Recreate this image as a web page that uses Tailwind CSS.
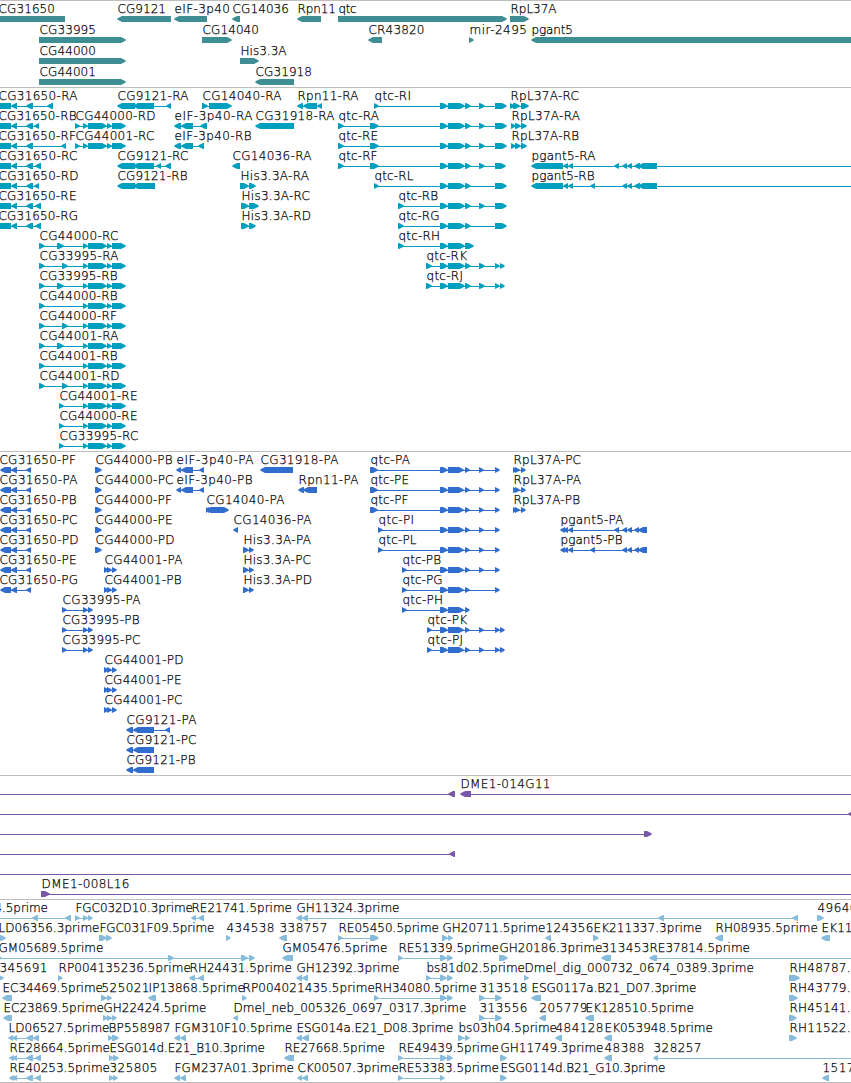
<!DOCTYPE html>
<html lang="en">
<head>
    <meta charset="UTF-8">
    <meta name="viewport" content="width=device-width, initial-scale=1.0">
    <title>Genome tracks</title>
    <script src="https://cdn.jsdelivr.net/npm/@tailwindcss/browser@4"></script>
</head>
<body class="bg-white overflow-hidden">
    <main class="flex flex-col w-[851px] border-b border-[#bebebe] font-['DejaVu_Sans',sans-serif] font-extralight text-[12px]">
        <section class="h-[87px] border-t border-[#bebebe]">
            <svg id="genes" class="block w-full h-full fill-[#3f8e93]"></svg>
        </section>
        <section class="h-[364px] border-t border-[#bebebe]">
            <svg id="transcripts" class="block w-full h-full fill-[#009fbf]"></svg>
        </section>
        <section class="h-[324px] border-t border-[#bebebe]">
            <svg id="proteins" class="block w-full h-full fill-[#306dcc]"></svg>
        </section>
        <section class="h-[124px] border-t border-[#bebebe]">
            <svg id="clones" class="block w-full h-full fill-[#7857a8]"></svg>
        </section>
        <section class="h-[183px] border-t border-[#bebebe]">
            <svg id="ests" class="block w-full h-full fill-[#87bbdc]"></svg>
        </section>
    </main>
    <script>
        // one feature per line: row label x strand start,end start,end ...
        // "*" as label means the feature has no name on screen
        const genes = `
            0 CG31650 -2 L -9,65
            0 CG9121 117 L 117,171
            0 eIF-3p40 174 L 174,207
            0 CG14036 232 L 232,240
            0 Rpn11 297 L 297,321
            0 qtc 338 R 338,507
            0 RpL37A 510 R 510,529
            1 CG33995 39 R 39,126
            1 CG14040 202 R 202,232
            1 CR43820 368 L 368,382
            1 mir-2495 469 R 469,474
            1 pgant5 531 L 531,860
            2 CG44000 39 R 39,126
            2 His3.3A 240 R 240,259
            3 CG44001 39 R 39,126
            3 CG31918 255 L 255,294`;

        const transcripts = `
            0 CG31650-RA -2 L -9,11 11,17 26,33 47,53
            1 CG31650-RB -2 L -9,11 11,17 26,33 34,39
            2 CG31650-RF -2 L -9,11 11,17 26,33 61,66
            3 CG31650-RC -2 L -9,11 11,17 26,33 35,41
            4 CG31650-RD -2 L -9,11 11,17 26,33 34,39
            5 CG31650-RE -2 L -9,11 11,17 26,33 35,41
            6 CG31650-RG -2 L -9,11 11,17 26,33 35,41
            1 CG44000-RD 75 R 75,80 83,88 88,107 107,112 112,126
            2 CG44001-RC 75 R 75,80 83,88 88,107 107,112 112,126
            0 CG9121-RA 117 L 117,135 133,154 166,171
            3 CG9121-RC 117 L 117,135 133,154 156,161 165,171
            4 CG9121-RB 117 L 117,135 133,155
            0 CG14040-RA 202 R 202,208 209,232
            1 eIF-3p40-RA 174 L 174,181 181,193 200,207
            2 eIF-3p40-RB 174 L 174,181 181,193 198,204
            1 CG31918-RA 255 L 255,294
            3 CG14036-RA 232 L 232,240
            4 His3.3A-RA 240 R 240,249 249,256
            5 His3.3A-RC 241 R 241,249 249,259
            6 His3.3A-RD 241 R 241,249 249,256
            0 Rpn11-RA 297 L 297,303 303,317 317,322
            0 qtc-RI 374 R 374,379 440,448 448,465 465,471 479,485 495,507
            1 qtc-RA 338 R 338,344 370,379 440,448 448,465 465,471 479,485 495,507
            2 qtc-RE 338 R 338,344 370,379 440,448 448,465 465,471 479,485 495,507
            3 qtc-RF 338 R 338,344 370,379 440,448 448,465 465,471 479,485 495,506
            4 qtc-RL 374 R 374,379 440,448 448,465 465,471 495,507
            5 qtc-RB 398 R 398,404 440,448 448,465 465,471 479,485 495,507
            6 qtc-RG 398 R 398,404 440,448 448,465 465,471 495,507
            7 qtc-RH 398 R 398,404 440,448 448,465 465,474
            8 qtc-RK 426 R 426,432 440,448 448,465 465,471 479,485 495,500 500,505
            9 qtc-RJ 426 R 426,432 440,448 448,465 465,471 479,485 495,500 500,505
            0 RpL37A-RC 510 R 510,515 513,520 521,529
            1 RpL37A-RA 511 R 511,516 515,521 521,527
            2 RpL37A-RB 511 R 511,516 515,521 521,527
            3 pgant5-RA 531 L 531,563 563,568 568,573 614,619 622,627 627,632 634,640 638,657 860,860
            4 pgant5-RB 531 L 531,563 563,568 568,573 590,595 622,627 627,632 634,640 638,657 860,860
            7 CG44000-RC 39 R 39,45 57,64 83,88 88,107 107,112 112,126
            8 CG33995-RA 39 R 39,45 62,68 83,88 88,107 107,112 112,126
            9 CG33995-RB 39 R 39,45 57,64 83,88 88,107 107,112 112,126
            10 CG44000-RB 39 R 39,45 83,88 88,107 107,112 112,126
            11 CG44000-RF 39 R 39,45 62,68 83,88 88,107 107,112 112,126
            12 CG44001-RA 39 R 39,45 57,64 83,88 88,107 107,112 112,126
            13 CG44001-RB 39 R 39,45 83,88 88,107 107,112 112,126
            14 CG44001-RD 39 R 39,45 62,68 83,88 88,107 107,112 112,126
            15 CG44001-RE 59 R 59,64 83,88 88,107 107,112 112,126
            16 CG44000-RE 59 R 59,64 83,88 88,107 107,112 112,126
            17 CG33995-RC 59 R 59,64 83,88 88,107 107,112 112,126`;

        const proteins = `
            0 CG31650-PF -1 L 0,11 11,17 26,31
            1 CG31650-PA -1 L 0,11 11,17 26,31
            2 CG31650-PB -1 L 0,11 11,17 26,31
            3 CG31650-PC -1 L 0,11 11,17 26,31
            4 CG31650-PD -1 L 0,11 11,17 26,31
            5 CG31650-PE -1 L 0,11 11,17 26,31
            6 CG31650-PG -1 L 0,11 11,17 26,31
            0 CG44000-PB 95 R 95,102
            1 CG44000-PC 95 R 95,102
            2 CG44000-PF 95 R 95,102
            3 CG44000-PE 95 R 95,102
            4 CG44000-PD 95 R 95,102
            5 CG44001-PA 104 R 104,109 107,112 112,117
            6 CG44001-PB 104 R 104,109 107,112 112,117
            7 CG33995-PA 62 R 62,67 83,88 88,93
            8 CG33995-PB 62 R 62,67 83,88 88,93
            9 CG33995-PC 62 R 62,67 83,88 88,93
            10 CG44001-PD 104 R 104,109 107,112 112,117
            11 CG44001-PE 104 R 104,109 107,112 112,117
            12 CG44001-PC 104 R 104,109 107,112 112,117
            13 CG9121-PA 126 L 126,133 133,154 165,170
            14 CG9121-PC 126 L 126,133 133,154
            15 CG9121-PB 126 L 126,133 133,154
            0 eIF-3p40-PA 176 L 176,181 181,193 199,204
            1 eIF-3p40-PB 176 L 176,181 181,193 199,204
            2 CG14040-PA 206 R 206,210 208,213 210,229
            3 CG14036-PA 233 L 233,238
            4 His3.3A-PA 243 R 243,249 249,254
            5 His3.3A-PC 243 R 243,249 249,254
            6 His3.3A-PD 243 R 243,249 249,254
            0 CG31918-PA 260 L 260,293
            1 Rpn11-PA 298 L 298,304 303,317
            0 qtc-PA 370 R 370,378 440,448 448,464 465,470 479,484 495,500
            1 qtc-PE 370 R 370,378 440,448 448,464 465,470 479,484 495,500
            2 qtc-PF 370 R 370,378 440,448 448,464 465,470 479,484 495,500
            3 qtc-PI 378 R 378,383 440,448 448,464 465,470 479,484 495,500
            4 qtc-PL 378 R 378,383 440,448 448,464 465,470 479,484 495,500
            5 qtc-PB 402 R 402,407 440,448 448,464 465,470 479,484 495,500
            6 qtc-PG 402 R 402,407 440,448 448,464 465,470 495,500
            7 qtc-PH 402 R 402,407 440,448 448,464 465,470
            8 qtc-PK 427 R 427,432 440,448 448,464 465,470 479,484 495,500 500,505
            9 qtc-PJ 427 R 427,432 440,448 448,464 465,470 479,484 495,500 500,505
            0 RpL37A-PC 513 R 513,518 515,520 521,526
            1 RpL37A-PA 513 R 513,518 515,520 521,526
            2 RpL37A-PB 513 R 513,518 515,520 521,526
            3 pgant5-PA 560 L 560,565 563,568 568,573 614,619 622,627 627,632 634,639 638,647
            4 pgant5-PB 560 L 560,565 563,568 568,573 590,595 622,627 627,632 634,639 638,647`;

        const clones = `
            0 * 0 L -9,-5 448,455
            0 DME1-014G11 460 L 460,471 860,860
            1 * 0 L -9,-5 848,856
            2 * 0 R -9,-5 644,652
            3 * 0 L -9,-5 449,455
            4 * 0 R -9,-5 860,860
            5 DME1-008L16 41 R 41,50 860,860`;

        const ests = `
            0 4.5prime -6 L -9,-5 32,38 65,71
            0 FGC032D10.3prime 75 R 75,80 83,88 88,93
            0 RE21741.5prime 191 L 191,196 198,204
            0 GH11324.3prime 296 L 296,302 302,308 658,664 792,798
            0 49640 817 R 817,824
            1 LD06356.3prime -2 R -2,6
            1 FGC031F09.5prime 99 R 99,107 106,112
            1 434538 226 R 226,231
            1 338757 279 L 279,287
            1 RE05450.5prime 338 R 338,343 370,379
            1 GH20711.5prime 442 R 442,448 448,453
            1 124356 545 L 545,551
            1 EK211337.3prime 593 R 593,599
            1 RH08935.5prime 715 L 715,723
            1 EK11 821 L 821,830
            2 GM05689.5prime -2 R -3,2 168,174 241,248 249,255
            2 GM05476.5prime 282 L 282,293
            2 RE51339.5prime 398 R 398,403 440,447 447,453
            2 GH20186.3prime 499 R 499,508
            2 313453 601 L 601,611
            2 RE37814.5prime 649 L 649,657 860,860
            3 345691 -1 R -1,4
            3 RP004135236.5prime 58 R 58,63
            3 RH24431.5prime 189 L 189,195 198,204
            3 GH12392.3prime 296 L 296,302 302,308
            3 bs81d02.5prime 426 R 426,431 440,447 447,453
            3 Dmel_dig_000732_0674_0389.3prime 524 R 524,529
            3 RH48787. 789 R 789,800
            4 EC34469.5prime 2 L 2,12
            4 525021 101 R 101,107 107,112
            4 IP13868.5prime 148 L 148,156
            4 RP004021435.5prime 242 R 242,247
            4 RH34080.5prime 374 R 374,379 440,447 447,453
            4 313518 479 R 479,485 495,502
            4 ESG0117a.B21_D07.3prime 531 L 531,541
            4 RH43779. 789 R 789,798
            5 EC23869.5prime 3 L 3,12
            5 GH22424.5prime 103 R 103,108 107,112 112,117
            5 Dmel_neb_005326_0697_0317.3prime 233 L 233,238
            5 313556 479 R 479,485 495,502
            5 205779 539 L 539,546
            5 EK128510.5prime 585 L 585,594
            5 RH45141. 789 R 789,797
            6 LD06527.5prime 8 L 8,13 12,17 26,33 33,39
            6 BP558987 108 R 108,113 112,119
            6 FGM310F10.5prime 174 L 174,180 180,186
            6 ESG014a.E21_D08.3prime 296 L 296,302 302,309
            6 bs03h04.5prime 458 R 458,464 465,470
            6 484128 555 L 555,562
            6 EK053948.5prime 604 L 604,612
            6 RH11522. 789 R 789,797
            7 RE28664.5prime 9 L 9,14 12,17 26,33 35,41
            7 ESG014d.E21_B10.3prime 109 R 109,114 113,119
            7 RE27668.5prime 284 L 284,294
            7 RE49439.5prime 398 R 398,403 440,447 447,453
            7 GH11749.3prime 500 R 500,507
            7 48388 604 L 604,612
            7 328257 653 L 653,658 860,860
            8 RE40253.5prime 9 L 9,14 12,17 26,33 35,41
            8 325805 109 R 109,114 113,118
            8 FGM237A01.3prime 174 L 174,180 180,186
            8 CK00507.3prime 297 L 297,302 302,308
            8 RE53383.5prime 398 R 398,403 440,445
            8 ESG0114d.B21_G10.3prime 500 R 500,507
            8 1517 822 L 822,829`;

        // advance of each character in px, digits are 8
        const advance = {
            A: 8, B: 7, C: 8, D: 9, E: 7, F: 6.5, G: 8.5, H: 9, I: 4, J: 4, K: 8, L: 6.5, M: 11, P: 7, R: 8, S: 7,
            a: 7, b: 7.5, c: 6, d: 7.5, e: 7, g: 7.5, h: 7.5, i: 3, l: 3, m: 11, n: 7, p: 7.5, q: 7.5, r: 5, s: 6, t: 4.5,
            ".": 4, "-": 6.5, "_": 6
        };

        function labelWidth(label) {
            let width = 0;
            for (const ch of label) width += advance[ch] || 8;
            return width;
        }

        function exon(a, b, strand, top) {
            const tip = Math.min(5, b - a);
            if (strand === "R") {
                return `<polygon points="${a},${top} ${b - tip},${top} ${b - 1},${top + 2} ${b},${top + 3} ${b - 1},${top + 4} ${b - tip},${top + 6} ${a},${top + 6}"/>`;
            }
            return `<polygon points="${b},${top} ${a + tip},${top} ${a + 1},${top + 2} ${a},${top + 3} ${a + 1},${top + 4} ${a + tip},${top + 6} ${b},${top + 6}"/>`;
        }

        function drawTrack(id, data, rowHeight) {
            let result = "";
            data.trim().split("\n").forEach((line) => {
                const [row, label, x, strand, ...parts] = line.trim().split(" ");
                const exons = parts.map((part) => part.split(",").map(Number));
                const y = row * rowHeight;
                const start = exons[0][0];
                const end = exons[exons.length - 1][1];
                if (exons.length > 1) {
                    // keep the line off the pointed ends
                    const from = strand === "L" ? start + 3 : start;
                    const to = strand === "R" ? end - 3 : end;
                    result += `<rect x="${from}" y="${y + 18}" width="${to - from}" height="1"/>`;
                }
                exons.forEach(([a, b]) => {
                    if (b > a) result += exon(a, b, strand, y + 15);
                });
                if (label !== "*") {
                    result += `<text x="${Number(x) + 0.5}" y="${y + 12}" textLength="${labelWidth(label)}" class="fill-black stroke-black stroke-[0.25px]">${label}</text>`;
                }
            });
            document.getElementById(id).innerHTML = result;
        }

        drawTrack("genes", genes, 21);
        drawTrack("transcripts", transcripts, 20);
        drawTrack("proteins", proteins, 20);
        drawTrack("clones", clones, 20);
        drawTrack("ests", ests, 20);
    </script>
</body>
</html>
